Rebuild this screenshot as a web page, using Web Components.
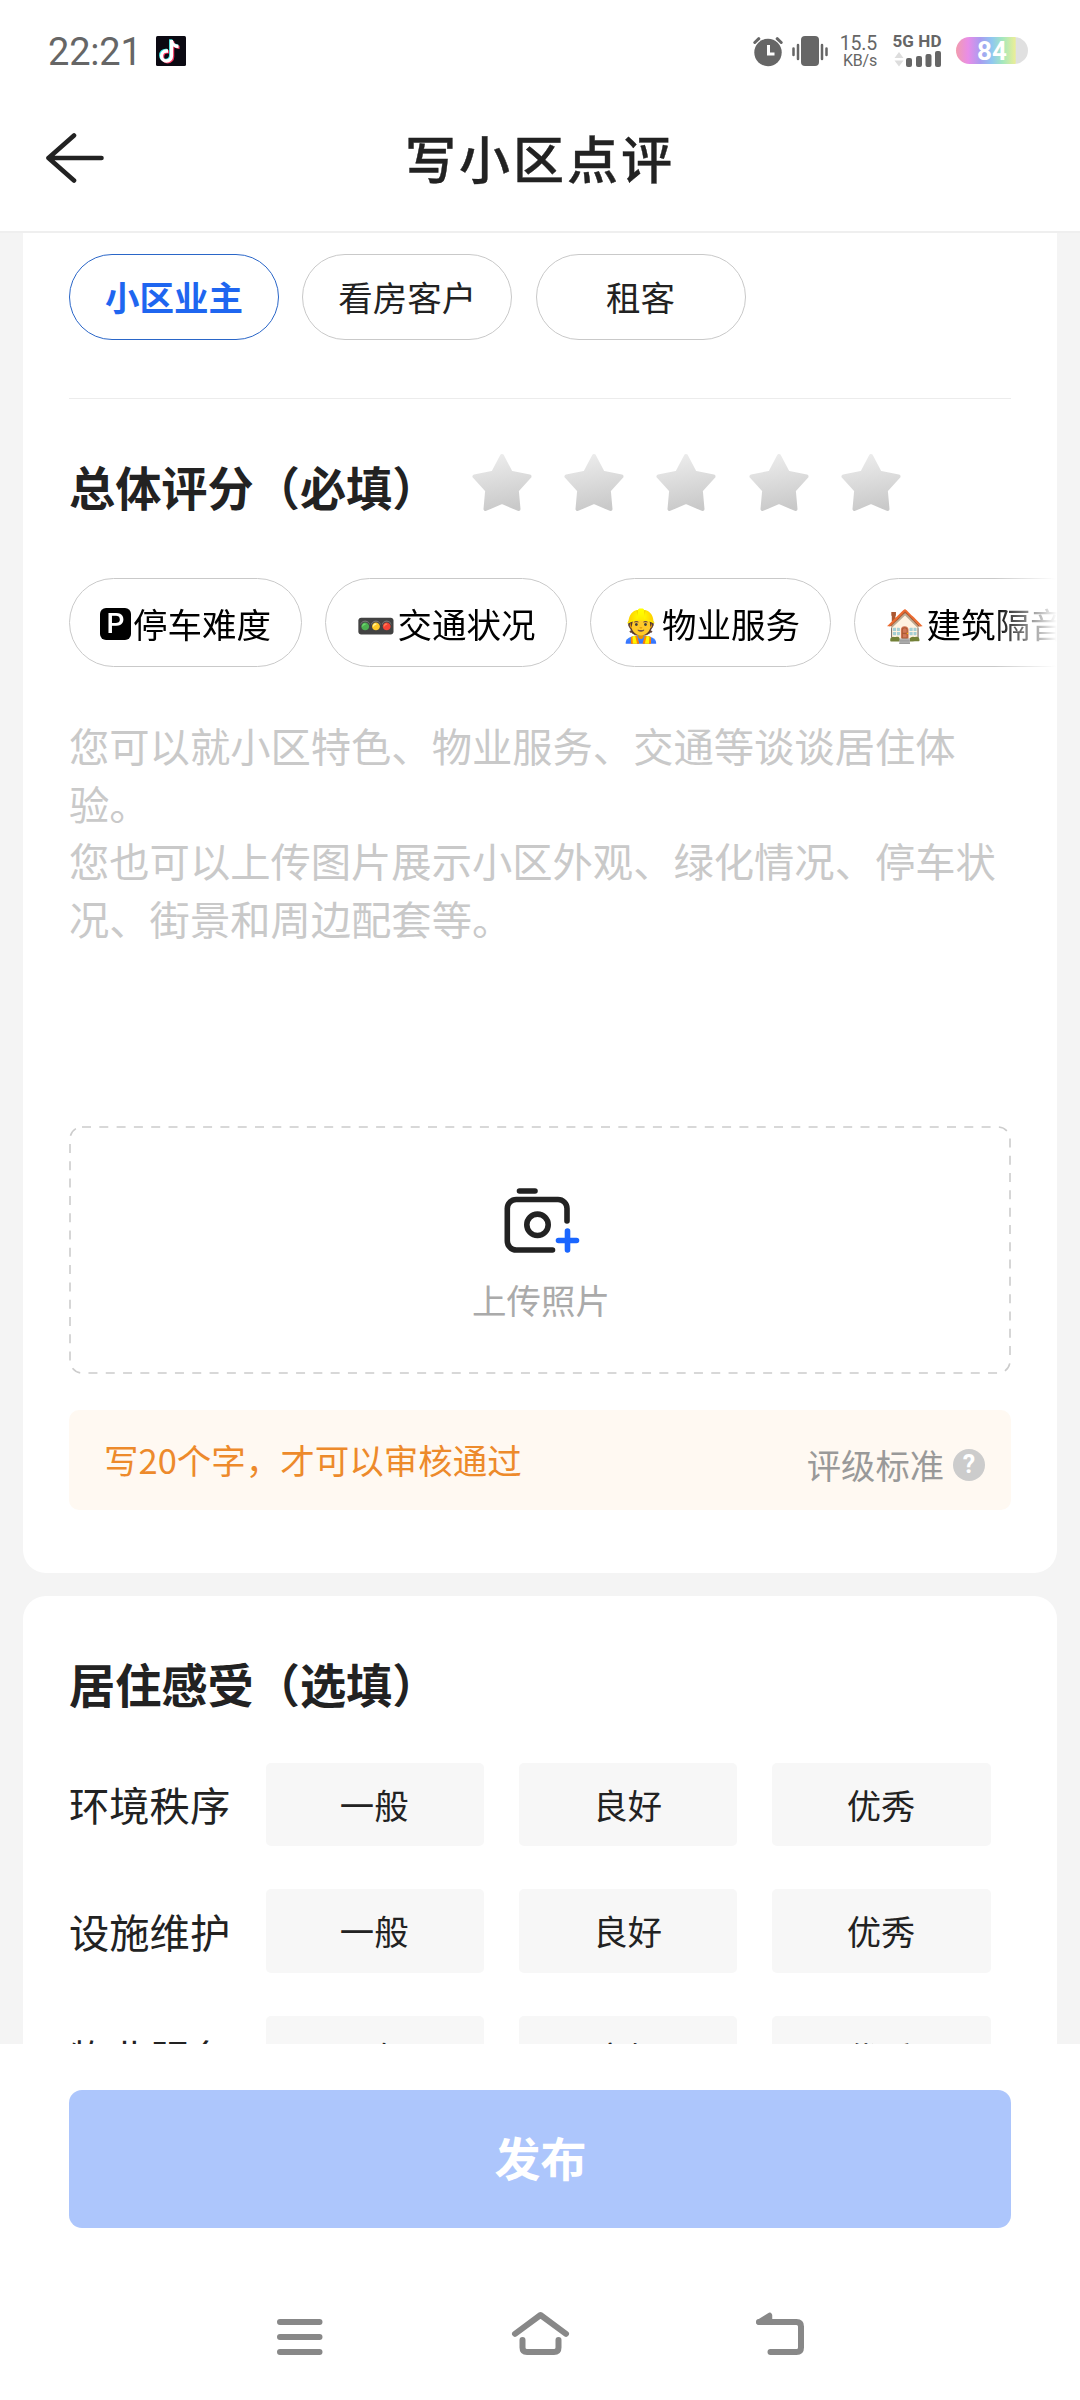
<!DOCTYPE html>
<html lang="zh-CN">
<head>
<meta charset="utf-8">
<title>写小区点评</title>
<style>
html, body { margin: 0; padding: 0; background: #fff; }
body { width: 1080px; height: 2400px; overflow: hidden; font-family: "Noto Sans CJK SC", "Noto Sans", sans-serif; color: #222; }
</style>
</head>
<body>
<review-page></review-page>
<script>
const define = (name, css, html) => customElements.define(name, class extends HTMLElement {
  constructor() {
    super();
    const root = this.attachShadow({ mode: "open" });
    const t = document.createElement("template");
    t.innerHTML = `<style>*{box-sizing:border-box}svg{display:block;flex:none}${css}</style>${html}`;
    root.append(t.content.cloneNode(true));
  }
});

define("status-bar", `
:host { display: flex; justify-content: space-between; align-items: flex-start; height: 90px; padding: 35px 52px 0 48px; color: #666; font-family: Roboto, sans-serif; }
.left, .right { display: flex; align-items: flex-start; }
.time { font-size: 38px; line-height: 34px; width: 108px; letter-spacing: -0.2px; white-space: nowrap; }
.left svg { margin-top: 1px; }
.speed { display: flex; flex-direction: column; align-items: flex-end; width: 38px; margin-left: 11px; margin-right: 1px; }
.speed b { font-weight: 400; font-size: 19.5px; line-height: 18px; letter-spacing: -.2px; }
.speed i { font-style: normal; font-size: 16px; line-height: 16px; letter-spacing: -.2px; }
.net { width: 50px; margin-left: 14px; }
.net b { display: block; font-size: 17px; line-height: 13px; letter-spacing: .1px; white-space: nowrap; text-align: center; }
.battery { display: flex; align-items: center; justify-content: center; width: 72px; height: 27px; margin: 2px 0 0 14px; border-radius: 14px; background: linear-gradient(90deg,#f29cae 0,#e88de8 17%,#a99cf0 34%,#8fc8f0 50%,#a5e8bd 65%,#e9ee98 82%,#e0e0e0 84%); color: #fff; font-size: 26px; font-weight: 700; }
`, `
<div class="left"><span class="time">22:21</span>
<svg width="30" height="31" viewBox="0 0 30 31"><rect width="30" height="30" rx="1.5" fill="#0b0912"/>
<g fill="none" stroke-width="3.3"><path d="M15.500 4v16a5 5 0 1 1-5-5h1.500M15.500 5c.5 3 3.500 5.500 7 5.500" stroke="#3be8e4" transform="translate(-.8,-.7)"/><path d="M15.500 4v16a5 5 0 1 1-5-5h1.500M15.500 5c.5 3 3.500 5.500 7 5.500" stroke="#f5325c" transform="translate(1.100,.9)"/><path d="M15.500 4v16a5 5 0 1 1-5-5h1.500M15.500 5c.5 3 3.500 5.500 7 5.500" stroke="#fff"/></g></svg></div>
<div class="right">
<svg width="76" height="34" viewBox="752 35 76 34"><g fill="#666"><circle cx="768" cy="52.500" r="13.700"/><rect x="801" y="36" width="18" height="30" rx="4"/></g>
<g stroke="#666" stroke-width="3" stroke-linecap="round"><path d="M754.800 42.500l4-3.800M781.200 42.500l-4-3.800"/><path d="M798 45v14M822 45v14M793.500 48.500v6.500M826.500 48.500v6.500" stroke-width="2.500"/></g><path d="M768.500 45v9h6" fill="none" stroke="#fff" stroke-width="3"/></svg>
<div class="speed"><b>15.5</b><i>KB/s</i></div>
<div class="net"><b>5G HD</b><svg width="50" height="19" viewBox="892 48 50 19"><g fill="#ddd"><path d="M894.500 58l4.500-6 4.500 6zM894.500 60.500l4.500 6 4.500-6z"/></g><g fill="#666"><rect x="906" y="58" width="6" height="9" rx="2"/><rect x="916" y="56" width="6" height="11" rx="2"/><rect x="925.500" y="54" width="6" height="13" rx="2"/><rect x="935" y="51" width="6" height="16" rx="2"/></g></svg></div>
<div class="battery">84</div>
</div>`);

define("app-header", `
:host { display: flex; align-items: center; height: 143px; border-bottom: 2px solid #efefef; padding: 0 46px; }
.title { flex: 1; text-align: center; font-size: 51px; line-height: 70px; font-weight: 500; -webkit-text-stroke: .4px #222; letter-spacing: 3px; padding: 0 58px 8px 0; }
svg { margin-bottom: 5px; }
`, `<svg width="58" height="50" viewBox="0 0 58 50" fill="none" stroke="#222" stroke-width="4.600" stroke-linecap="round" stroke-linejoin="round"><path d="M28 2.500L2.500 25L28 47.500M2.500 25H55.500"/></svg><div class="title"><slot></slot></div>`);

define("role-chip", `
:host { display: flex; align-items: center; justify-content: center; box-sizing: border-box; width: 210px; height: 86px; border: 1px solid #c9c9c9; border-radius: 43px; font-size: 34.500px; line-height: 50px; padding-bottom: 2px; }
:host([selected]) { color: #1f66f0; border-color: #2a66c8; font-weight: 700; }
`, `<slot></slot>`);

define("topic-tag", `
:host { display: flex; flex: none; align-items: center; box-sizing: border-box; height: 89px; border: 1px solid #c9c9c9; border-radius: 45px; padding: 0 30px; color: #000; font-size: 34.500px; line-height: 50px; white-space: nowrap; }
::slotted(.emoji) { font-size: 32px; line-height: 50px; margin-right: 1.500px; }
`, `<slot></slot>`);

define("star-rating", `
:host { display: flex; gap: 32.300px; }
`, Array.from({ length: 5 }, (_, i) => `<svg width="60" height="58" viewBox="0 0 60 58"><defs><linearGradient id="g${i}" x1=".4" y1="0" x2=".6" y2="1"><stop offset="0" stop-color="#ebebeb"/><stop offset="1" stop-color="#c9c9c9"/></linearGradient></defs><path d="M30 3L38.800 19.700L57.500 23.500L44.800 37.300L46.500 56L30 49L13.500 56L15.200 37.300L2.500 23.500L21.200 19.700Z" fill="url(#g${i})" stroke="url(#g${i})" stroke-width="4" stroke-linejoin="round"/></svg>`).join(""));

define("photo-upload", `
:host { display: grid; width: 942px; height: 248px; }
:host > * { grid-area: 1 / 1; }
.in { display: flex; flex-direction: column; align-items: center; padding: 62px 0 0 2px; color: #aaa; font-size: 34.500px; line-height: 50px; }
.in svg { margin: 0 -1px 20px 0; }
`, `<svg class="frame" width="942" height="248"><rect x="1" y="1" width="940" height="246" rx="12" fill="none" stroke="#ccc" stroke-width="1.600" stroke-dasharray="9 8.300"/></svg>
<div class="in"><svg width="76" height="66" viewBox="0 0 76 66" fill="none" stroke="#222" stroke-width="5.600" stroke-linecap="round"><path d="M15.500 3H31M63 33V20.500a9 9 0 0 0-9-9H12.300a9 9 0 0 0-9 9V53a9 9 0 0 0 9 9H48.500"/><circle cx="33.500" cy="36.800" r="10.700"/><path d="M54.500 52.500H72.500M63.500 43V62" stroke="#1a66ff"/></svg><slot></slot></div>`);

define("word-hint", `
:host { display: flex; justify-content: space-between; box-sizing: border-box; height: 100px; padding: 0 26px 0 35px; background: #fff9f2; border-radius: 10px; font-size: 34.500px; line-height: 50px; }
.tip { color: #ed8a2b; padding-top: 24px; }
.std { display: flex; align-items: center; gap: 9px; color: #999; font-size: 34.300px; height: 50px; margin-top: 29px; }
.q { display: flex; align-items: center; justify-content: center; width: 32px; height: 32px; margin-top: 2px; border-radius: 50%; background: #ccc; color: #fff; font: 700 25px/32px Roboto, sans-serif; }
`, `<span class="tip"><slot></slot></span><span class="std">评级标准<span class="q">?</span></span>`);

define("feel-row", `
:host { display: flex; align-items: center; height: 83.500px; }
.label { width: 196.500px; font-size: 40.300px; line-height: 60px; padding-bottom: 0; }
.opts { display: flex; gap: 35.200px; }
.opts span { display: flex; align-items: center; justify-content: center; width: 218.300px; height: 83.500px; border-radius: 5px; background: #f7f7f7; font-size: 34.300px; line-height: 50px; padding: 0 1px 1px 0; }
`, `<div class="label"><slot></slot></div><div class="opts"><span>一般</span><span>良好</span><span>优秀</span></div>`);

define("form-card", `
:host { display: block; flex: none; box-sizing: border-box; width: 1034px; padding: 0 46px; background: #fff; border-radius: 23px; }
:host([top]) { border-radius: 0 0 23px 23px; height: 1340px; padding-top: 21px; }
`, `<slot></slot>`);

define("publish-bar", `
:host { display: block; height: 214px; padding: 46px 69px 0; box-sizing: border-box; background: #fff; }
div { display: flex; align-items: center; justify-content: center; height: 138px; padding: 0 0 6px 1px; border-radius: 13px; background: #adc6fc; color: #fff; font-size: 46px; font-weight: 700; }
`, `<div><slot></slot></div>`);

define("nav-bar", `
:host { display: flex; justify-content: space-between; padding: 52px 274px 0 275px; height: 142px; box-sizing: border-box; }
`, `<svg width="50" height="50" viewBox="275 2310 50 50" stroke="#888" stroke-width="6" stroke-linecap="round"><path d="M280 2322H319.500M280 2337H319.500M280 2352H319.500"/></svg>
<svg width="60" height="50" viewBox="510.500 2310 60 50" fill="none" stroke="#888" stroke-width="6" stroke-linecap="round" stroke-linejoin="round"><path d="M514.500 2333.800L540 2315L565.500 2333.800M522 2340V2347.500Q522 2352 526.500 2352H553.500Q558 2352 558 2347.500V2340"/></svg>
<svg width="50" height="50" viewBox="756 2310 50 50" fill="none" stroke="#888" stroke-width="6" stroke-linecap="round" stroke-linejoin="round"><path d="M770.500 2352H796.500Q801 2352 801 2347.500V2326.500Q801 2322 796.500 2322H759"/><path d="M759 2322L769.500 2315.500V2322Z" stroke-width="5.500" fill="#888"/></svg>`);

define("review-page", `
:host { display: flex; flex-direction: column; width: 1080px; height: 2400px; background: #fff; }
.scroll { display: flex; flex-direction: column; align-items: center; gap: 23px; height: 1811px; flex: none; overflow: hidden; background: #f4f4f4; }
.roles { display: flex; gap: 23.300px; padding-bottom: 58px; border-bottom: 1px solid #ececec; }
.head { display: flex; justify-content: space-between; padding: 54px 110px 0 0; height: 179px; }
h2 { margin: 0; font-size: 46.200px; line-height: 60px; font-weight: 700; white-space: nowrap; }
.head h2 { margin-top: 3px; }
.tags { display: flex; gap: 23px; width: 988px; overflow: hidden; -webkit-mask-image: linear-gradient(90deg,#000 925px,transparent 988px); mask-image: linear-gradient(90deg,#000 925px,transparent 988px); }
.park { display: flex; align-items: center; justify-content: center; width: 31px; height: 32px; margin: 3px 2px 0 0; border-radius: 6px; background: #000; color: #fff; font: 500 28px/32px Roboto, sans-serif; }
.ph { width: 942px; height: 376px; margin-top: 49px; font-size: 40.300px; line-height: 57.600px; color: #c9c9c9; white-space: pre-line; margin-bottom: 34px; }
word-hint { margin-top: 36px; }
.feel { padding-top: 57px; }
feel-row + feel-row { margin-top: 43px; }
.feel h2 { margin-bottom: 49.500px; }
`, `
<status-bar></status-bar>
<app-header>写小区点评</app-header>
<div class="scroll">
<form-card top>
<div class="roles"><role-chip selected>小区业主</role-chip><role-chip>看房客户</role-chip><role-chip>租客</role-chip></div>
<div class="head"><h2>总体评分（必填）</h2><star-rating></star-rating></div>
<div class="tags"><topic-tag><span class="park">P</span>停车难度</topic-tag><topic-tag><span class="emoji">🚥</span>交通状况</topic-tag><topic-tag><span class="emoji">👷</span>物业服务</topic-tag><topic-tag><span class="emoji">🏠</span>建筑隔音</topic-tag></div>
<div class="ph">您可以就小区特色、物业服务、交通等谈谈居住体验。
您也可以上传图片展示小区外观、绿化情况、停车状况、街景和周边配套等。</div>
<photo-upload>上传照片</photo-upload>
<word-hint>写20个字，才可以审核通过</word-hint>
</form-card>
<form-card><div class="feel"><h2>居住感受（选填）</h2><feel-row>环境秩序</feel-row><feel-row>设施维护</feel-row><feel-row>物业服务</feel-row></div></form-card>
</div>
<publish-bar>发布</publish-bar>
<nav-bar></nav-bar>`);
</script>
</body>
</html>
